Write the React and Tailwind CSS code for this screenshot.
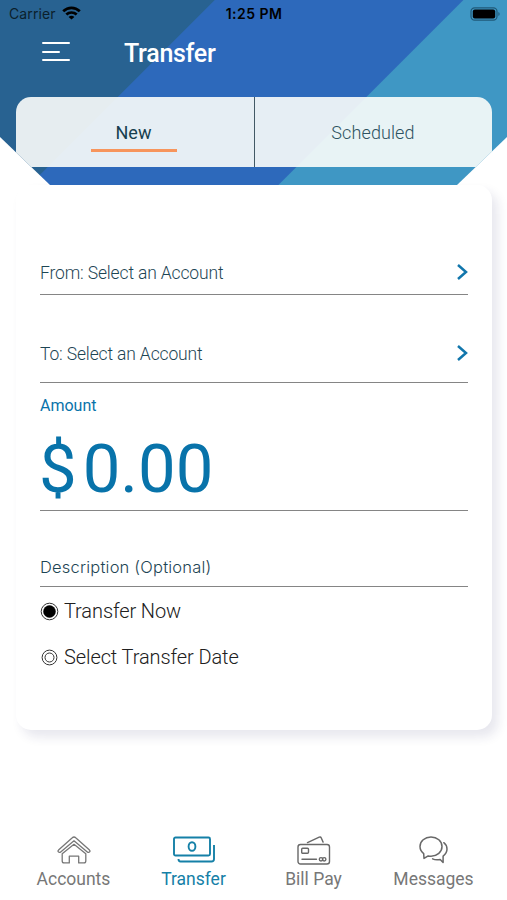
import React from 'react';

function StatusBar() {
  return (
    <div className="grid h-7 grid-cols-3 items-center pl-[9px] pr-[6px] font-['Inter',sans-serif] text-[14px] text-black">
      <div className="-mt-[2px] flex items-center gap-[6px]">
        <span className="text-[14px] tracking-[0.1px] text-[#0b1f2c]">Carrier</span>
        <svg width="19" height="14" viewBox="0 0 19 14" fill="none" stroke="black" strokeWidth="2.7">
          <path d="M1.2 5.3C6 .7 13 .7 17.8 5.3" />
          <path d="M4.3 8.6c3-2.8 7.4-2.8 10.4 0" />
          <path d="M9.5 13.6 6.6 10.9c1.7-1.4 4.1-1.4 5.8 0z" fill="black" stroke="none" />
        </svg>
      </div>
      <span className="-ml-[1px] -mt-[2px] pr-[1px] text-center font-semibold tracking-[0.45px]">1:25 PM</span>
      <svg className="-mt-[1px] justify-self-end" width="31" height="14" viewBox="0 0 31 14">
        <rect x="1" y=".8" width="26" height="12.4" rx="3.6" fill="none" stroke="#205a78" strokeWidth="1.2" />
        <rect x="2.8" y="2.6" width="22.4" height="8.8" rx="2" fill="black" />
        <path d="M28.4 5v4c1.6-.5 1.6-3.5 0-4z" fill="#205a78" />
      </svg>
    </div>
  );
}

function Header() {
  return (
    <header className="h-[185px] bg-[linear-gradient(135deg,#286291_151.3px,#2d69bb_152.3px,#2d69bb_327.2px,#3f97c4_328.2px)] [clip-path:polygon(0_0,100%_0,100%_137px,457px_100%,50px_100%,0_137px)]">
      <StatusBar />
      <div className="flex h-[69px] items-start pl-[42px]">
        <div className="mt-[14px] flex w-[28px] flex-col gap-[6.5px]">
          <span className="h-[2px] w-[28px] rounded bg-white" />
          <span className="h-[2px] w-[18px] rounded bg-white" />
          <span className="h-[2px] w-[28px] rounded bg-white" />
        </div>
        <h1 className="ml-[54px] mt-[11px] text-[25px] font-medium leading-[30px] tracking-[-0.28px] text-white">Transfer</h1>
      </div>
      <div className="mx-[15.5px] flex h-[70px] rounded-t-[15px] bg-[#fbfdfb]/90 text-[18px]">
        <div className="flex w-[239px] flex-col items-center border-r border-[#425965] pt-[25px] text-[#173f4f]">
          <span className="-ml-[2px] leading-[22px]">New</span>
          <span className="-ml-[2px] mt-[5px] h-[2.5px] w-[86px] bg-[#f7955c]" />
        </div>
        <div className="flex-1 pt-[25px] text-center font-light leading-[22px] tracking-[0.1px] text-[#2d5261]">Scheduled</div>
      </div>
    </header>
  );
}

function AccountRow({ label, className }) {
  return (
    <div className={`flex justify-between border-b-[1.5px] border-[#858585] font-light text-[#1d4554] ${className}`}>
      <span className="text-[17.5px] leading-[22px] tracking-[-0.15px]">{label}</span>
      <svg className="mt-[1px]" width="12" height="18" viewBox="0 0 12 18" fill="none" stroke="#1176ac" strokeWidth="2.5">
        <path d="M2 2l8 7L2 16" />
      </svg>
    </div>
  );
}

function Radio({ label, checked }) {
  return (
    <div className="flex h-[46px] items-center gap-[5px] text-[20px] font-light tracking-[-0.1px] text-[#202020]">
      <svg width="19" height="19" viewBox="0 0 19 19" fill="none" stroke="#333">
        <circle cx="9.5" cy="9.5" r={checked ? 8.3 : 7.4} />
        {checked ? <circle cx="9.5" cy="9.5" r="6" fill="black" stroke="black" strokeWidth=".5" /> : <circle cx="9.5" cy="9.5" r="4.5" />}
      </svg>
      <span>{label}</span>
    </div>
  );
}

function TransferForm() {
  return (
    <main className="mx-[15.5px] h-[545px] rounded-[15px] bg-white pl-[24.5px] pr-[23.5px] shadow-[6px_7px_11px_rgba(40,40,100,0.11)]">
      <AccountRow label="From: Select an Account" className="h-[110px] pt-[76.5px]" />
      <AccountRow label="To: Select an Account" className="h-[88px] pt-[47.5px]" />
      <div className="h-[128px] border-b-[1.5px] border-[#858585] text-[#0873aa]">
        <div className="pt-[12px] text-[16px] leading-[22px]">Amount</div>
        <div className="mt-[13px] flex items-center gap-[6px] text-[67px] leading-[78px]">
          <span className="-ml-[1px]">$</span>
          <span>0.00</span>
        </div>
      </div>
      <div className="h-[76px] border-b-[1.5px] border-[#858585] pt-[44.5px] font-['Inter',sans-serif] text-[16.5px] font-light leading-[22px] tracking-[0.2px] text-[#1d4554]">
        Description (Optional)
      </div>
      <div className="pt-[1px]">
        <Radio label="Transfer Now" checked />
        <Radio label="Select Transfer Date" />
      </div>
    </main>
  );
}

function AccountsIcon() {
  return (
    <svg width="34" height="28" viewBox="0 0 34 28" fill="none" stroke="#777" strokeWidth="1.3" strokeLinejoin="round" strokeLinecap="round">
      <path d="M17 1c-.7 0-1.2.3-1.7.8L1.8 13.7c-.9.8-1 1.5-.4 2.2.6.7 1.5.7 2.3 0L17 4.8l13.3 11.1c.8.7 1.7.7 2.3 0 .6-.7.5-1.4-.4-2.2L18.7 1.8C18.2 1.3 17.7 1 17 1z" />
      <path d="M5.2 17.8V25c0 1.3.6 1.9 1.9 1.9h5.2v-6.7h9.4v6.7h5.2c1.3 0 1.9-.6 1.9-1.9v-7.2L17 8.3z" />
    </svg>
  );
}

function TransferIcon() {
  return (
    <svg width="42" height="28" viewBox="0 0 42 28" fill="none" stroke="#1580a7" strokeWidth="1.9">
      <rect x="1" y="1.5" width="36" height="18" rx="1.5" />
      <ellipse cx="19" cy="10.5" rx="3.4" ry="4.3" />
      <path d="M41 9v14c0 1.8-.8 2.5-2.5 2.5H7.5c-1.5 0-2-.8-2-2.5" />
    </svg>
  );
}

function BillPayIcon() {
  return (
    <svg width="34" height="29" viewBox="0 0 34 29" fill="none" stroke="#686868" strokeWidth="1.4" strokeLinecap="round">
      <rect x="1" y="8.5" width="31.5" height="19.5" rx="2.5" />
      <rect x="4.7" y="12.3" width="6.8" height="5" rx="1" />
      <path d="M5 23.3h14.5M10.5 6.6 22.2 1.2c1-.4 1.7-.1 2.1.8l1.8 4.1" />
      <circle cx="24" cy="23.3" r="1.7" />
      <circle cx="27.2" cy="23.3" r="1.7" />
    </svg>
  );
}

function MessagesIcon() {
  return (
    <svg width="30" height="28" viewBox="0 0 30 28" fill="none" stroke="#686868" strokeWidth="1.5" strokeLinejoin="round" strokeLinecap="round">
      <path d="M4.7 17.6C2.4 15.8 1 13.4 1 10.6 1 5.2 5.8 1 12 1s11 4.2 11 9.6-4.8 9.6-11 9.6c-1 0-1.9-.1-2.8-.3L5 22.4z" />
      <path d="M24.8 6.7c2.2 1.6 3.2 3.7 3.2 6.4 0 2.9-1.4 5.3-3.9 7.1v6.2l-2.9-3c-2.7.7-5.2.6-7.6-.6" />
    </svg>
  );
}

function Tab({ icon, label, color }) {
  return (
    <div className={`flex w-[120px] flex-col items-center ${color}`}>
      <div className="flex h-[30px] items-center">{icon}</div>
      <span className="mt-[2px] text-[17.5px] leading-[24px]">{label}</span>
    </div>
  );
}

export default function App() {
  return (
    <div className="flex h-[900px] w-[507px] flex-col overflow-hidden bg-white font-['Roboto',sans-serif]">
      <div className="relative z-10"><Header /></div>
      <TransferForm />
      <nav className="mt-[105px] flex pl-[13.5px]">
        <Tab icon={<AccountsIcon />} label="Accounts" color="text-[#777]" />
        <Tab icon={<TransferIcon />} label="Transfer" color="text-[#1580a7]" />
        <Tab icon={<BillPayIcon />} label="Bill Pay" color="text-[#777]" />
        <Tab icon={<MessagesIcon />} label="Messages" color="text-[#777]" />
      </nav>
    </div>
  );
}
